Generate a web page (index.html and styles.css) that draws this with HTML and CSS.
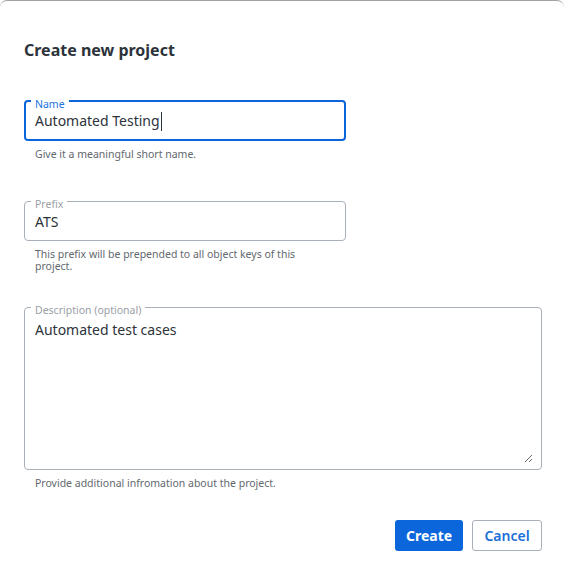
FILE: index.html
```html
<!DOCTYPE html>
<html lang="en">
<head>
<meta charset="utf-8">
<title>Create new project</title>
<link rel="stylesheet" href="styles.css">
</head>
<body>
<div class="dialog">
  <h1 class="title">Create new project</h1>
  <form class="form">
    <div class="field">
      <fieldset class="box box--focused">
        <legend class="label"><span class="label-text">Name</span></legend>
        <div class="control"><span>Automated Testing</span><span class="caret"></span></div>
      </fieldset>
      <p class="helper">Give it a meaningful short name.</p>
    </div>
    <div class="field">
      <fieldset class="box">
        <legend class="label"><span class="label-text">Prefix</span></legend>
        <input class="control" type="text" value="ATS">
      </fieldset>
      <p class="helper">This prefix will be prepended to all object keys of this project.</p>
    </div>
    <div class="field">
      <fieldset class="box box--area">
        <legend class="label"><span class="label-text">Description (optional)</span></legend>
        <textarea class="control control--area">Automated test cases</textarea>
      </fieldset>
      <p class="helper">Provide additional infromation about the project.</p>
    </div>
    <div class="actions">
      <button type="button" class="btn btn--primary">Create</button>
      <button type="button" class="btn btn--secondary">Cancel</button>
    </div>
  </form>
</div>
</body>
</html>
```

FILE: styles.css
```css
html, body {
  margin: 0;
  padding: 0;
  background: #ffffff;
}

.dialog {
  box-sizing: border-box;
  height: 574px;
  border-top: 1px solid #9ea3a8;
  border-radius: 7px 7px 0 0;
  padding: 38px 22px 0 24px;
  font-family: "Noto Sans", "Open Sans", sans-serif;
  color: #2d333a;
}

.title {
  margin: 0;
  font-size: 16px;
  line-height: 22px;
  font-weight: 700;
  color: #2d333a;
}

.form {
  display: flex;
  flex-direction: column;
  margin-top: 34px;
}

.field {
  margin-bottom: 29px;
}

.box {
  margin: 0;
  padding: 0 10px;
  border: 1px solid #a9b0b7;
  border-radius: 4px;
  min-width: 0;
}

.field:first-child .box,
.field:nth-child(2) .box {
  width: 322px;
  box-sizing: border-box;
}

.box--focused {
  border: 2px solid #0a66da;
  padding: 0 9px;
}

.label {
  height: 12px;
  margin-left: -4px;
  padding: 0 4px;
  font-size: 10.5px;
  line-height: 12px;
  color: #9aa0a6;
}

.label-text {
  vertical-align: -3px;
}

.box--focused .label {
  color: #1b73e0;
}

.control {
  display: block;
  box-sizing: border-box;
  width: 100%;
  height: 33px;
  margin: 0;
  padding: 0 0 5px;
  border: none;
  outline: none;
  background: transparent;
  font-family: "Noto Sans", "Open Sans", sans-serif;
  font-size: 14px;
  line-height: 20px;
  color: #2d333a;
}

.box--focused .control {
  display: flex;
  align-items: center;
  height: 32px;
  padding: 0 0 4px;
}

.caret {
  display: inline-block;
  width: 1px;
  height: 19px;
  background: #2d333a;
  margin-left: 1px;
}

.box--area {
  padding: 0 8px 6px 10px;
}

.control--area {
  height: 150px;
  padding: 7px 0 0;
  resize: vertical;
}

.helper {
  margin: 7px 0 0;
  padding-left: 11px;
  max-width: 270px;
  min-height: 18px;
  font-size: 10.5px;
  line-height: 12px;
  color: #62686e;
}

.actions {
  display: flex;
  justify-content: flex-end;
  gap: 9px;
  margin-top: -4px;
}

.btn {
  box-sizing: border-box;
  height: 31px;
  padding: 0;
  border-radius: 3px;
  font-family: "Noto Sans", "Open Sans", sans-serif;
  font-size: 14px;
  cursor: pointer;
}

.btn--primary {
  width: 68px;
  border: none;
  background: #0a66da;
  color: #ffffff;
  font-weight: 700;
}

.btn--secondary {
  width: 70px;
  border: 1px solid #a9b0b7;
  background: #ffffff;
  color: #1b6fd8;
  font-weight: 600;
}
```
